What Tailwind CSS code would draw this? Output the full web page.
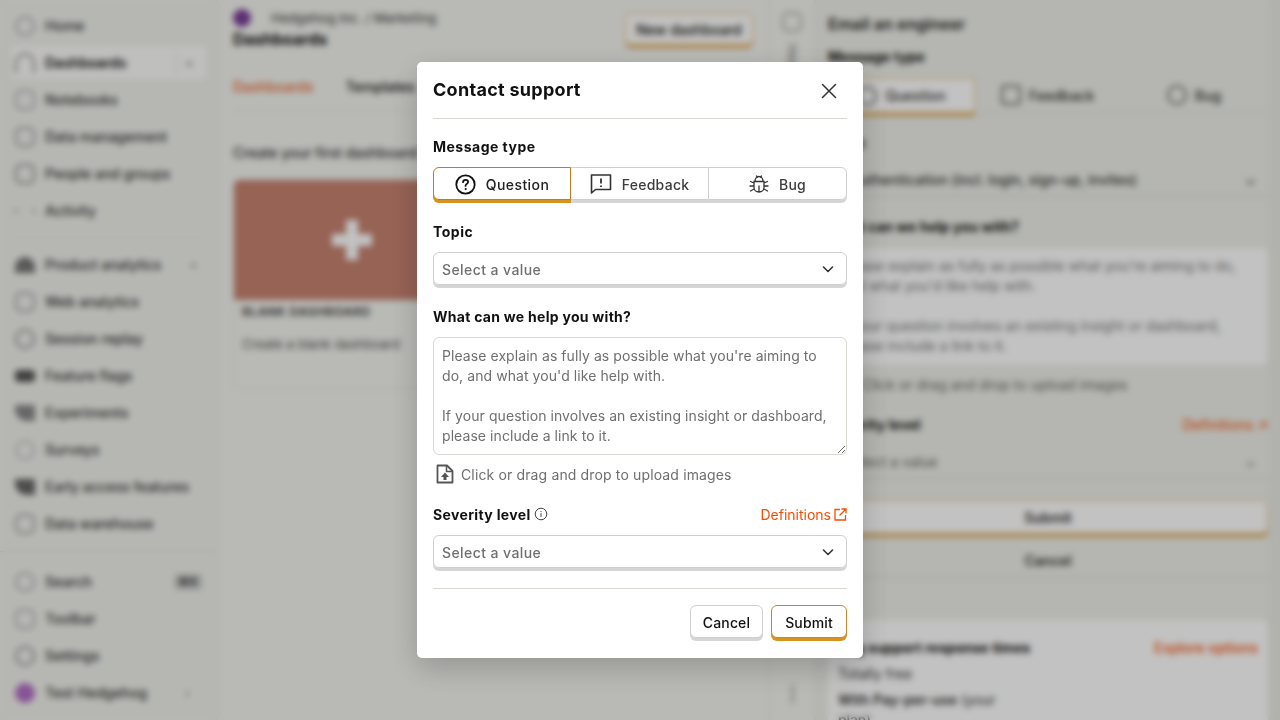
<!DOCTYPE html>
<html lang="en">
<head>
    <meta charset="UTF-8">
    <meta name="viewport" content="width=device-width, initial-scale=1.0">
    <title>Contact support</title>
    <script src="https://cdn.jsdelivr.net/npm/@tailwindcss/browser@4"></script>
</head>
<body class="h-screen overflow-hidden bg-[#f3f4ef] font-['Inter',sans-serif] text-[14px] text-[#111]">

    <!-- App behind the modal -->
    <div class="flex h-[720px] overflow-hidden">

        <!-- Sidebar -->
        <aside class="flex w-[218px] shrink-0 flex-col border-r border-[#e2e2da] bg-[#f0f1ec] font-medium text-[#333]">
            <div class="min-h-0 flex-1 overflow-hidden pt-[7px]">
                <div class="flex h-[37px] items-center gap-[10px] px-[15px]"><span class="size-5 rounded-full border-2 border-[#aaa]"></span>Home</div>
                <div class="mx-[9px] flex h-[37px] items-center gap-[10px] rounded-md border border-[#e4e4de] bg-white/70 px-[5px] font-semibold text-[#111]"><span class="size-5 rounded-t-full border-2 border-b-0 border-[#888]"></span>Dashboards<span class="ml-auto border-l border-[#ddd] px-2 text-[#999]">+</span></div>
                <div class="flex h-[37px] items-center gap-[10px] px-[15px]"><span class="size-5 rounded-md border-2 border-[#aaa]"></span>Notebooks</div>
                <div class="flex h-[37px] items-center gap-[10px] px-[15px]"><span class="size-5 rounded-md border-2 border-[#999]"></span>Data management</div>
                <div class="flex h-[37px] items-center gap-[10px] px-[15px]"><span class="size-5 rounded-md border-2 border-[#888]"></span>People and groups</div>
                <div class="flex h-[37px] items-center gap-[10px] px-[15px]"><span class="h-[6px] w-5 border-x-2 border-[#aaa]"></span>Activity</div>
                <div class="mx-2 mt-2 mb-2 border-t border-[#e2e2da]"></div>
                <div class="flex h-[37px] items-center gap-[10px] px-[15px]"><span class="h-4 w-5 rounded-t-full bg-[#777]"></span>Product analytics<span class="ml-auto pr-1 text-[#999]">+</span></div>
                <div class="flex h-[37px] items-center gap-[10px] px-[15px]"><span class="size-5 rounded-md border-2 border-[#999]"></span>Web analytics</div>
                <div class="flex h-[37px] items-center gap-[10px] px-[15px]"><span class="size-5 rounded-full border-2 border-[#888]"></span>Session replay</div>
                <div class="flex h-[37px] items-center gap-[10px] px-[15px]"><span class="h-3 w-5 rounded-sm bg-[#555]"></span>Feature flags</div>
                <div class="flex h-[37px] items-center gap-[10px] px-[15px]"><span class="h-4 w-5 rounded-bl-xl bg-[#888]"></span>Experiments</div>
                <div class="flex h-[37px] items-center gap-[10px] px-[15px]"><span class="size-5 rounded-full border-2 border-[#bbb]"></span>Surveys</div>
                <div class="flex h-[37px] items-center gap-[10px] px-[15px]"><span class="h-4 w-5 rounded-bl-xl bg-[#666]"></span>Early access features</div>
                <div class="flex h-[37px] items-center gap-[10px] px-[15px]"><span class="size-5 rounded-md border-2 border-[#999]"></span>Data warehouse</div>
            </div>
            <div class="border-t border-[#d8d8d0] pt-[11px] pb-[9px]">
                <div class="flex h-[37px] items-center gap-[10px] px-[15px]"><span class="size-5 rounded-full border-2 border-[#aaa]"></span>Search<span class="ml-auto rounded bg-[#ccc] px-1 text-xs">⌘K</span></div>
                <div class="flex h-[37px] items-center gap-[10px] px-[15px]"><span class="size-5 rounded-md border-2 border-[#aaa]"></span>Toolbar</div>
                <div class="flex h-[37px] items-center gap-[10px] px-[15px]"><span class="size-5 rounded-full border-2 border-[#888]"></span>Settings</div>
                <div class="flex h-[37px] items-center gap-[10px] px-[15px]"><span class="size-5 rounded-full bg-[#b06fc4]"></span>Test Hedgehog<span class="ml-auto pr-3 text-[#999]">›</span></div>
            </div>
        </aside>

        <!-- Main column -->
        <main class="w-[551px] shrink-0 px-[15px]">
            <div class="flex h-[62px] justify-between pt-[9px]">
                <div>
                    <div class="flex items-center gap-[20px] text-[13px] leading-4 font-medium text-[#555]"><span class="size-[18px] rounded-full bg-[#7a3f97]"></span>Hedgehog Inc. / Marketing</div>
                    <div class="mt-[2px] text-base leading-5 font-bold">Dashboards</div>
                </div>
                <button class="mt-[4px] mr-[1px] h-[32px] w-[128px] rounded-md border border-[#e6b96e] bg-white/80 font-medium shadow-[0_3px_0_#d8a24a]">New dashboard</button>
            </div>
            <div class="flex h-[49px] items-center gap-[32px] border-b border-[#e2e2da] font-medium">
                <span class="text-[#e8692e]">Dashboards</span>
                <span>Templates</span>
            </div>
            <div class="mt-[32px] leading-5 font-medium text-[#333]">Create your first dashboard:</div>
            <div class="mt-[16px] h-[210px] w-[238px] rounded-md border border-[#e2e2da]">
                <div class="flex h-[120px] items-center justify-center rounded-t-md bg-[#c68270]">
                    <svg class="size-[46px]" viewBox="0 0 46 46" fill="#fff"><path d="M17 3h12v14h14v12H29v14H17V29H3V17h14z"/></svg>
                </div>
                <div class="mt-[2px] px-2 text-xs leading-5 font-semibold tracking-wider text-[#333] uppercase">Blank dashboard</div>
                <div class="mt-3 px-2 text-[13px] leading-5 text-[#555]">Create a blank dashboard</div>
            </div>
        </main>

        <!-- Side tab strip -->
        <div class="flex w-[46px] shrink-0 flex-col items-center border-x border-[#e2e2da] pt-3">
            <span class="size-5 rounded-md border-2 border-[#aaa]"></span>
            <span class="mt-3 text-xs text-[#777] [writing-mode:vertical-rl]">Help</span>
            <span class="mt-auto mb-4 h-5 w-[3px] rounded bg-[#bbb]"></span>
        </div>

        <!-- Right support panel -->
        <section class="min-w-0 flex-1 border-r-[12px] border-[#e9eae4] bg-[#eeefe9] pt-[14px] pl-[13px] text-[#333]">
            <div class="text-base leading-5 font-semibold text-[#222]">Email an engineer</div>
            <div class="mt-[13px] leading-5 font-bold text-[#111]">Message type</div>
            <div class="mt-[11px] flex h-[35px] font-medium">
                <div class="flex w-[147px] items-center justify-center gap-2 rounded-l-md border border-[#e6b96e] bg-white shadow-[0_3px_0_#d8a24a]"><span class="size-5 rounded-full border-2 border-[#666]"></span>Question</div>
                <div class="flex w-[145px] items-center justify-center gap-2 border-b border-[#ddd]"><span class="size-5 rounded border-2 border-[#666]"></span>Feedback</div>
                <div class="flex flex-1 items-center justify-center gap-2 border-b border-[#ddd]"><span class="size-5 rounded-full border-2 border-[#666]"></span>Bug</div>
            </div>
            <div class="mt-[20px] leading-5 font-bold text-[#111]">Topic</div>
            <div class="mt-[10px] flex h-[34px] items-center justify-between border-b-2 border-[#ddd] pr-3 pl-[22px] font-medium"><span>Authentication (incl. login, sign-up, invites)</span><span>⌄</span></div>
            <div class="mt-[20px] leading-5 font-bold text-[#111]">What can we help you with?</div>
            <div class="mt-[11px] h-[117px] rounded-md bg-white px-[12px] py-2 leading-5 text-[#777]">Please explain as fully as possible what you're aiming to do, and what you'd like help with.<br><br>If your question involves an existing insight or dashboard, please include a link to it.</div>
            <div class="mt-[10px] pl-[34px] leading-5 text-[#666]">Click or drag and drop to upload images</div>
            <div class="mt-[20px] flex justify-between leading-5"><span class="font-bold text-[#111]">Severity level</span><span class="text-[#f54e00]">Definitions ↗</span></div>
            <div class="mt-[10px] flex h-[34px] items-center justify-between border-b-2 border-[#ddd] pr-3 pl-[17px] text-[#666]"><span>Select a value</span><span>⌄</span></div>
            <button class="mt-[21px] block h-[34px] w-full rounded-md border border-[#e6b96e] bg-white font-semibold shadow-[0_3px_0_#d8a24a]">Submit</button>
            <button class="mt-[10px] block h-[34px] w-full border-b-2 border-[#ddd] font-semibold">Cancel</button>
            <div class="mt-[42px] h-[120px] rounded-t-md bg-white px-[10px] pt-[18px]">
                <div class="flex justify-between leading-5"><span class="font-bold text-[#111]">Avg support response times</span><span class="font-medium text-[#f54e00]">Explore options</span></div>
                <div class="mt-[6px] leading-5">Totally free</div>
                <div class="mt-[6px] leading-5"><b class="font-semibold">With Pay-per-use</b> <span>(your</span><br><span>plan)</span></div>
            </div>
        </section>
    </div>

    <!-- Modal overlay -->
    <div class="fixed inset-0 z-10 flex items-start justify-center bg-black/[0.24] pt-[62px] backdrop-blur-[3px]">
        <div class="h-[596px] w-[446px] rounded-[5px] bg-white px-4 tracking-[0.01em] shadow-[0_10px_30px_rgba(0,0,0,0.2)]">

            <div class="flex h-[57px] items-center justify-between border-b border-[#d9d9d3]">
                <h2 class="-mt-[2px] text-[18px] font-bold tracking-[0.016em] text-[#111]">Contact support</h2>
                <svg class="mt-[1px] mr-[8px] size-[20px]" viewBox="0 0 20 20" fill="none" stroke="#333" stroke-width="1.5" stroke-linecap="round"><path d="M3.5 3.5l13 13M16.5 3.5l-13 13"/></svg>
            </div>

            <div class="mt-[18px] leading-5 font-bold tracking-[0.035em]">Message type</div>
            <div class="mt-[10px] flex h-[33px] rounded-[6px] font-medium tracking-[0.02em] shadow-[0_3px_0_#d6d4d4]">
                <div class="z-10 flex w-[138px] items-center justify-center gap-[10px] rounded-l-[6px] border border-[#b97e21] bg-white pt-[1px] tracking-[0.03em] text-[#222] shadow-[0_3px_0_#d8921f]">
                    <svg class="size-[21px]" viewBox="0 0 21 21" fill="none" stroke="#111" stroke-width="1.8" stroke-linecap="round"><circle cx="10.5" cy="10.5" r="9.2"/><path d="M8 8.2c.1-1.5 1.2-2.4 2.6-2.4 1.4 0 2.5.9 2.5 2.2 0 1.9-2.6 1.9-2.6 3.9"/><circle cx="10.5" cy="15" r=".6" fill="#111" stroke-width="1"/></svg>
                    Question
                </div>
                <div class="flex w-[137px] items-center justify-center gap-[10px] border-y border-[#cfcfcf] pt-[1px] text-[#3c3c3c]">
                    <svg class="size-[22px]" viewBox="0 0 22 22" fill="none" stroke="#333" stroke-width="1.6" stroke-linejoin="round"><path d="M1.5 2h19v14.5H5.5l-4 3.5z"/><path d="M11 5.5v5M11 12.5v1.5" stroke-width="1.8"/></svg>
                    Feedback
                </div>
                <div class="flex flex-1 items-center justify-center gap-[10px] rounded-r-[6px] border border-[#cfcfcf] pt-[1px] text-[#3c3c3c]">
                    <svg class="size-[20px]" viewBox="0 0 20 20" fill="none" stroke="#333" stroke-width="1.3" stroke-linecap="round"><path d="M6 7c0-2.4 1.7-4.5 4-4.5S14 4.6 14 7M5 7.5h10v6c0 2.5-2.2 4.5-5 4.5s-5-2-5-4.5zM10 12v6M7.5 2l1 1.2M12.5 2l-1 1.2M1.500 7.500 5 9M1 12h4M1.500 17 5 15M18.500 7.500 15 9M19 12h-4M18.500 17 15 15"/></svg>
                    Bug
                </div>
            </div>

            <div class="mt-[22px] leading-5 font-bold tracking-[0.035em]">Topic</div>
            <div class="mt-[10px] flex h-[33px] items-center justify-between rounded-[6px] border border-[#cfcfcf] pt-[1px] pr-[10px] pl-2 font-medium tracking-[0.03em] text-[#6f6f6f] shadow-[0_3px_0_#d6d4d4]">
                Select a value
                <svg class="size-[16px]" viewBox="0 0 16 16" fill="none" stroke="#333" stroke-width="1.6" stroke-linecap="round" stroke-linejoin="round"><path d="M3.500 6 8 10.500 12.500 6"/></svg>
            </div>

            <div class="mt-[22px] leading-5 font-bold tracking-[0.02em]">What can we help you with?</div>
            <textarea class="mt-[10px] block h-[118px] w-full rounded-[6px] border border-[#d9d9d3] py-2 pr-4 pl-2 leading-5 tracking-[0.005em] outline-none placeholder:text-[#6f6f6f]" placeholder="Please explain as fully as possible what you're aiming to do, and what you'd like help with.&#10;&#10;If your question involves an existing insight or dashboard, please include a link to it."></textarea>

            <div class="mt-[9px] flex h-5 items-center gap-[6px] pl-[2px] text-[#6f6f6f]">
                <svg class="size-[20px]" viewBox="0 0 20 20" fill="none" stroke="#555" stroke-width="1.8" stroke-linejoin="round"><path d="M2.500 1.500h9.500l5.500 5.500v11.500h-15z"/><path d="M11.500 2v5.500H17" stroke-width="1.500"/><path d="M10 8.500 14 13h-2.500v3h-3v-3H6z" fill="#555" stroke="none"/></svg>
                Click or drag and drop to upload images
            </div>

            <div class="mt-[20px] flex h-5 items-center justify-between">
                <span class="flex items-center gap-[3px] font-bold tracking-[0.025em]">Severity level
                    <svg class="size-[14px]" viewBox="0 0 14 14" fill="none" stroke="#444" stroke-width="1"><circle cx="7" cy="7" r="5.800"/><path d="M7 6.200v3.800M7 4v1.100"/></svg>
                </span>
                <span class="flex items-center gap-[3px] tracking-normal text-[#f54e00]">Definitions
                    <svg class="size-[13px]" viewBox="0 0 13 13" fill="none" stroke="#f54e00" stroke-width="1.300"><path d="M6 1.500H1v10.500h10.500V7M7.500 1h4.500v4.500M12 1 5.500 7.500"/></svg>
                </span>
            </div>
            <div class="mt-[11px] flex h-[33px] items-center justify-between rounded-[6px] border border-[#cfcfcf] pt-[1px] pr-[10px] pl-2 font-medium tracking-[0.03em] text-[#6f6f6f] shadow-[0_3px_0_#d6d4d4]">
                Select a value
                <svg class="size-[16px]" viewBox="0 0 16 16" fill="none" stroke="#333" stroke-width="1.6" stroke-linecap="round" stroke-linejoin="round"><path d="M3.500 6 8 10.500 12.500 6"/></svg>
            </div>

            <div class="mt-[20px] flex justify-end gap-2 border-t border-[#d9d9d3] pt-4">
                <button class="h-[33px] w-[73px] rounded-[6px] border border-[#cfcfcf] bg-white pt-[1px] font-medium shadow-[0_3px_0_#d6d4d4]">Cancel</button>
                <button class="h-[33px] w-[76px] rounded-[6px] border border-[#c08a35] bg-white pt-[1px] font-medium shadow-[0_3px_0_#d8921f]">Submit</button>
            </div>
        </div>
    </div>
</body>
</html>
